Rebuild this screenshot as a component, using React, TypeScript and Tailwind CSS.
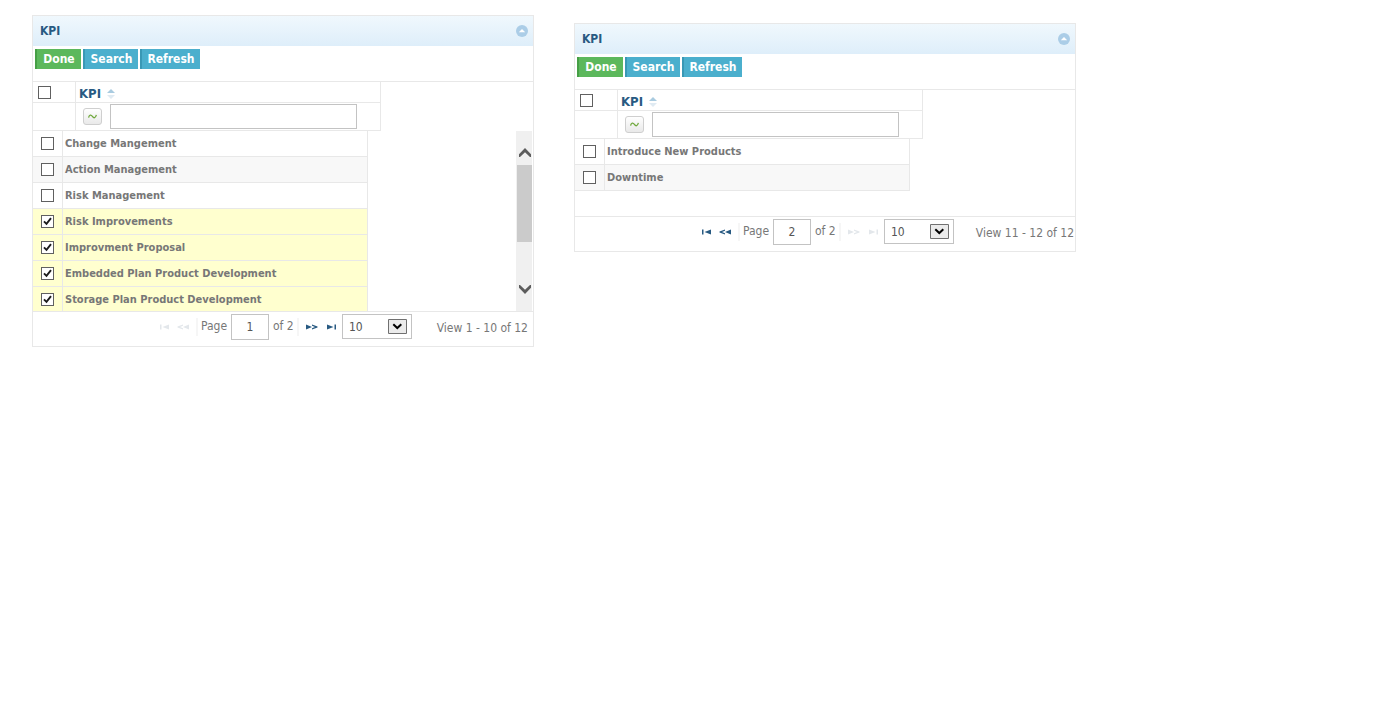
import { useState, type ReactNode } from "react";

interface Kpi {
  name: string;
  selected?: boolean;
}

interface KpiGridProps {
  id: string;
  rows: Kpi[];
  page: number;
  pageCount: number;
  summary: string;
  scrollable?: boolean;
  className?: string;
}

const FIRST_PAGE: Kpi[] = [
  { name: "Change Mangement" },
  { name: "Action Management" },
  { name: "Risk Management" },
  { name: "Risk Improvements", selected: true },
  { name: "Improvment Proposal", selected: true },
  { name: "Embedded Plan Product Development", selected: true },
  { name: "Storage Plan Product Development", selected: true },
];

const SECOND_PAGE: Kpi[] = [{ name: "Introduce New Products" }, { name: "Downtime" }];

function Checkbox({
  label,
  checked,
  onChange,
}: {
  label: string;
  checked: boolean;
  onChange: () => void;
}) {
  return (
    <label className="grid size-[13px]">
      <input
        type="checkbox"
        aria-label={label}
        checked={checked}
        onChange={onChange}
        className="peer col-start-1 row-start-1 size-[13px] appearance-none border border-[#606060] bg-white"
      />
      <svg
        viewBox="0 0 13 13"
        className="pointer-events-none invisible col-start-1 row-start-1 size-[13px] peer-checked:visible"
        fill="none"
        stroke="#1c1c1c"
        strokeWidth="1.9"
      >
        <path d="M3 6.3 5.5 8.9 10 3.2" />
      </svg>
    </label>
  );
}

function PagerButton({
  label,
  disabled,
  children,
}: {
  label: string;
  disabled: boolean;
  children: ReactNode;
}) {
  return (
    <button
      type="button"
      aria-label={label}
      disabled={disabled}
      className="text-[#285a82] disabled:text-[#e3e7eb]"
    >
      <svg viewBox="0 0 12 8" className="h-2 w-3" fill="currentColor">
        {children}
      </svg>
    </button>
  );
}

function Separator() {
  return <span className="h-[18px] w-0.5 bg-[#f6f6f6]" />;
}

function KpiGrid({
  id,
  rows,
  page,
  pageCount,
  summary,
  scrollable = false,
  className = "",
}: KpiGridProps) {
  const [items, setItems] = useState(rows);
  const allSelected = items.every((r) => r.selected);

  const toggle = (index: number) =>
    setItems(items.map((r, i) => (i === index ? { ...r, selected: !r.selected } : r)));

  const toggleAll = () => setItems(items.map((r) => ({ ...r, selected: !allSelected })));

  return (
    <section className={`w-full max-w-[502px] border border-[#e8e8e8] bg-white ${className}`}>
      <header className="flex h-[30px] items-center justify-between bg-linear-to-b from-[#f0f8fd] to-[#deeefa] pr-[5px] pl-[7px]">
        <h2 className="text-[12px] font-bold text-[#285a82]">KPI</h2>
        <button type="button" aria-label="Collapse">
          <svg viewBox="0 0 12 12" className="size-3">
            <circle cx="6" cy="6" r="6" fill="#abcde7" />
            <path d="M2.8 7.3 6 4l3.2 3.3z" fill="#fff" />
          </svg>
        </button>
      </header>

      <div className="flex h-9 items-start gap-0.5 border-b border-[#e8e8e8] px-0.5 pt-[3px] text-[12px] font-bold text-white">
        <button type="button" className="h-5 w-[46px] border-l-2 border-[#469f46] bg-[#5cb85c]">
          Done
        </button>
        <button type="button" className="h-5 w-[55px] border-l-2 border-[#3998b5] bg-[#4bafcd]">
          Search
        </button>
        <button type="button" className="h-5 w-[60px] border-l-2 border-[#3998b5] bg-[#4bafcd]">
          Refresh
        </button>
      </div>

      <table className="w-[348px] table-fixed border-separate border-spacing-0">
        <thead>
          <tr className="h-[21px]">
            <th className="w-[43px] border-r border-b border-[#e8e8e8] p-0 pl-[5px]">
              <Checkbox label="Select all" checked={allSelected} onChange={toggleAll} />
            </th>
            <th className="border-r border-b border-[#e8e8e8] p-0 pl-[3px]">
              <button
                type="button"
                className="flex h-5 items-center gap-1.5 pt-1 text-[13px] leading-4 font-bold text-[#285a82]"
              >
                KPI
                <svg viewBox="0 0 8 10" className="h-2.5 w-2">
                  <path d="M0 4 4 0l4 4z" fill="#a9cbe0" />
                  <path d="M0 6h8L4 10z" fill="#dfeaf2" />
                </svg>
              </button>
            </th>
          </tr>
          <tr className="h-7">
            <td className="border-r border-b border-[#e8e8e8] p-0" />
            <td className="border-r border-b border-[#e8e8e8] p-0 pl-[7px]">
              <div className="flex items-center gap-2">
                <button
                  type="button"
                  aria-label="Filter operator"
                  className="flex h-[17px] w-[19px] items-center justify-center rounded-[3px] border border-[#cfcfcf] bg-linear-to-b from-white to-[#e9e9e9]"
                >
                  <svg
                    viewBox="0 0 9 5"
                    className="h-[5px] w-[9px]"
                    fill="none"
                    stroke="#6fa83c"
                    strokeWidth="1.3"
                  >
                    <path d="M.6 3.6C1.2.6 3 .4 4.4 2.4s3 2 4-1.6" />
                  </svg>
                </button>
                <input
                  type="text"
                  aria-label="Filter by KPI"
                  className="h-[25px] w-[247px] border border-[#c3c3c3] px-1 text-[12px] text-[#555]"
                />
              </div>
            </td>
          </tr>
        </thead>
      </table>

      <div
        className={`flex justify-between border-b border-[#e8e8e8] ${
          scrollable ? "h-[181px] overflow-hidden" : "min-h-[78px] items-start"
        }`}
      >
        <table className="w-[335px] table-fixed border-separate border-spacing-0 self-start text-[11px] leading-4 font-bold text-[#777]">
          <tbody>
            {items.map((row, i) => (
              <tr
                key={row.name}
                className={`h-[26px] ${
                  row.selected ? "bg-[#ffffcf]" : i % 2 ? "bg-[#f8f8f8]" : "bg-white"
                }`}
              >
                <td className="w-[30px] border-r border-b border-[#e8e8e8] p-0 pl-2">
                  <Checkbox
                    label={`Select ${row.name}`}
                    checked={!!row.selected}
                    onChange={() => toggle(i)}
                  />
                </td>
                <td className="border-r border-b border-[#e8e8e8] p-0 pl-0.5 whitespace-nowrap">
                  {row.name}
                </td>
              </tr>
            ))}
          </tbody>
        </table>

        {scrollable && (
          <div className="mr-px flex w-4 flex-col bg-[#f0f0f0]">
            <div className="flex h-[34px] items-center justify-center pt-2 pl-px">
              <svg viewBox="0 0 12 9" className="h-[9px] w-3" fill="#5c5c5c">
                <path d="M0 6.2 6 0l6 6.2V9H11L6 4.2 1 9H0z" />
              </svg>
            </div>
            <div className="ml-px h-[77px] bg-[#cbcbcb]" />
            <div className="flex flex-1 items-end justify-center pb-[17px] pl-px">
              <svg viewBox="0 0 12 9" className="h-[9px] w-3" fill="#5c5c5c">
                <path d="M0 2.8 6 9l6-6.2V0H11L6 4.8 1 0H0z" />
              </svg>
            </div>
          </div>
        )}
      </div>

      <footer className="flex h-[34px] items-start pt-0.5 text-[12px] leading-4 text-[#777]">
        <div className="ml-[125px] flex h-[26px] items-center gap-[7px]">
          <PagerButton label="First page" disabled={page === 1}>
            <path d="M2 1.5h1.5v5H2zM11 1.5v5L4.5 4z" />
          </PagerButton>
          <PagerButton label="Previous page" disabled={page === 1}>
            <path d="M12 1.5v5L6 4zM6 1.5v1.3L3 4l3 1.2v1.3L.5 4.5v-1z" />
          </PagerButton>
          <Separator />
        </div>
        <label htmlFor={`${id}-page`} className="ml-[3px] w-[30px] pt-1">
          Page
        </label>
        <input
          id={`${id}-page`}
          type="text"
          defaultValue={page}
          className="h-[26px] w-[38px] border border-[#c3c3c3] text-center text-[#555]"
        />
        <span className="ml-1 w-6 pt-1 whitespace-nowrap">of {pageCount}</span>
        <div className="flex h-[26px] items-center gap-[7px]">
          <Separator />
          <PagerButton label="Next page" disabled={page === pageCount}>
            <path d="M0 1.5v5L6 4zM6 1.5v1.3L9 4 6 5.2v1.3l5.5-2v-1z" />
          </PagerButton>
          <PagerButton label="Last page" disabled={page === pageCount}>
            <path d="M2 1.5v5L8.5 4zM9.5 1.5H11v5H9.5z" />
          </PagerButton>
        </div>
        <div className="ml-[5px] grid">
          <select
            aria-label="Rows per page"
            defaultValue="10"
            className="col-start-1 row-start-1 h-[25px] w-[70px] appearance-none border border-[#c3c3c3] bg-white pl-1.5 text-[#555]"
          >
            <option>10</option>
            <option>20</option>
            <option>30</option>
          </select>
          <svg
            viewBox="0 0 19 15"
            className="pointer-events-none col-start-1 row-start-1 mr-[5px] h-[15px] w-[19px] self-center justify-self-end"
          >
            <path d="M.5.5h18v14H.5z" fill="#ebebeb" stroke="#707070" />
            <path d="M5.3 5.2 9.3 9l4-3.8" fill="none" stroke="#000" strokeWidth="2" />
          </svg>
        </div>
        <span className={`ml-auto pt-1.5 whitespace-nowrap ${scrollable ? "pr-[5px]" : "pr-px"}`}>
          {summary}
        </span>
      </footer>
    </section>
  );
}

export default function App() {
  return (
    <main className="flex min-h-screen items-start gap-10 bg-white px-8 pt-[15px] font-['DejaVu_Sans_Condensed','DejaVu_Sans',sans-serif]">
      <KpiGrid
        id="first"
        rows={FIRST_PAGE}
        page={1}
        pageCount={2}
        summary="View 1 - 10 of 12"
        scrollable
      />
      <KpiGrid
        id="second"
        rows={SECOND_PAGE}
        page={2}
        pageCount={2}
        summary="View 11 - 12 of 12"
        className="mt-2"
      />
    </main>
  );
}
